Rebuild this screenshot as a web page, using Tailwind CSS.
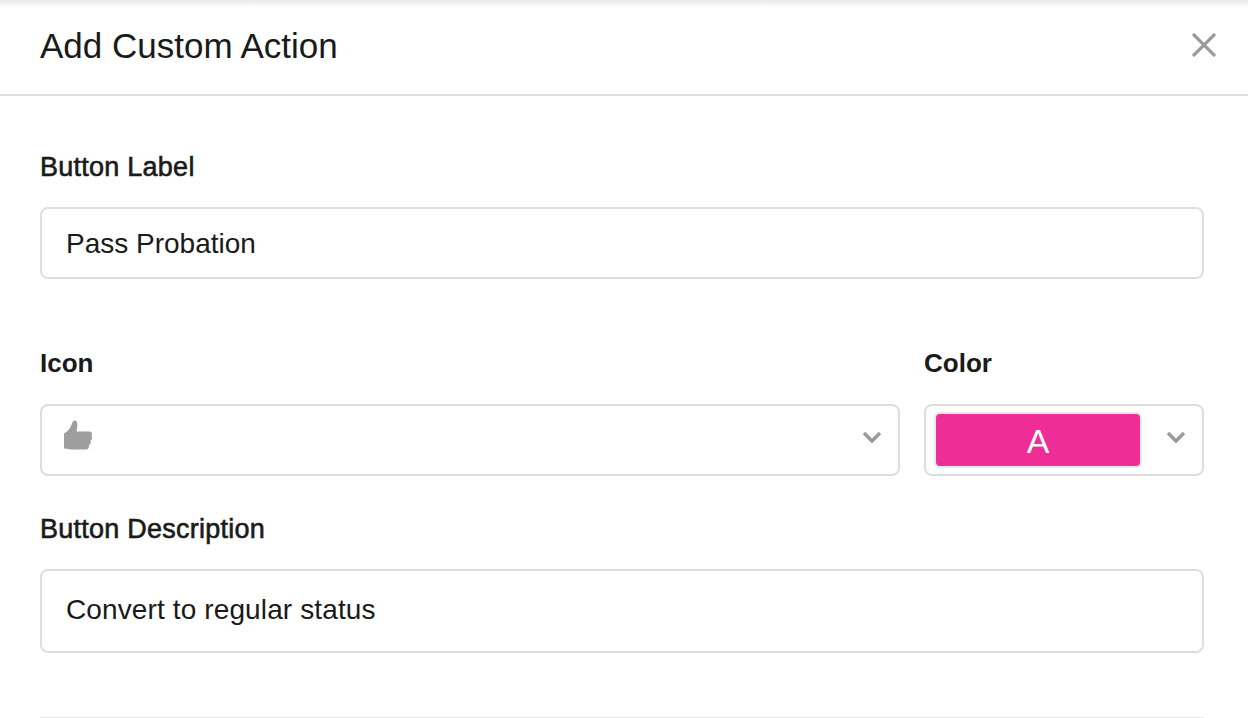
<!DOCTYPE html>
<html lang="en">
  <head>
    <meta charset="UTF-8" />
    <title>Add Custom Action</title>
    <script src="https://cdn.jsdelivr.net/npm/@tailwindcss/browser@4"></script>
  </head>
  <body class="bg-white text-[#1a1a1a] font-['Liberation_Sans',Arial,sans-serif] overflow-hidden">
    <div class="w-[1248px] h-[718px] overflow-hidden flex flex-col relative">
      <div class="absolute top-0 left-0 right-0 h-2 bg-gradient-to-b from-[#e9e9e9] to-white"></div>
      <header class="relative h-[96px] shrink-0 border-b-2 border-[#dedede] flex items-center justify-between pl-10 pr-[28px] pb-[4px]">
        <h1 class="text-[35px] leading-none font-normal">Add Custom Action</h1>
        <button class="w-[32px] h-[32px] flex items-center justify-center text-[#9a9a9a]">
          <svg width="24" height="24" viewBox="0 0 24 24" fill="none" stroke="currentColor" stroke-width="3.2"><path d="M1 1 L23 23 M23 1 L1 23" /></svg>
        </button>
      </header>

      <main class="flex-1 pl-10 pr-[44px] flex flex-col">
        <label class="block mt-[55px] text-[27px] leading-[32px] tracking-[0.25px] font-normal [-webkit-text-stroke:0.6px_#1a1a1a]">Button Label</label>
        <div class="mt-[24px] h-[72px] border-2 border-[#dedede] rounded-lg px-6 pt-[2px] flex items-center text-[28px]">Pass Probation</div>

        <div class="flex gap-6 mt-[68px]">
          <div class="w-[860px]">
            <label class="block text-[26px] leading-[32px] font-bold">Icon</label>
            <div class="mt-[25px] h-[72px] border-2 border-[#dedede] rounded-lg pl-[21px] pr-[16px] flex items-center justify-between">
              <svg width="30" height="34" viewBox="0 0 30 34" fill="#9e9e9e" class="-mt-2">
                <path d="M1 14.500 C4 13 7 10 8.500 6 C9.500 2 11 1 12.500 1.500 C14.500 2.500 15 6 13.500 12.500 L26 12.500 C29 12.500 29.500 15 28.500 16.500 C29.500 18 29.500 20.500 27.500 21.500 C28.500 23.500 27.500 25.500 26 26 C26.500 28.500 25 30.500 23 30.500 L11 30.500 C7 30.500 5 30 1 29.500 Z" />
              </svg>
              <svg width="20" height="14" viewBox="0 0 20 14" fill="none" stroke="#9a9a9a" stroke-width="3.400" class="-translate-y-[3px]"><path d="M2 3 L10 11 L18 3" /></svg>
            </div>
          </div>
          <div class="w-[280px]">
            <label class="block text-[26px] leading-[32px] font-bold">Color</label>
            <div class="mt-[25px] h-[72px] border-2 border-[#dedede] rounded-lg pl-[8px] pr-[16px] flex items-center justify-between">
              <div class="w-[208px] h-[56px] bg-[#ee2e96] border-2 border-[#e8e8e8] rounded-md text-white text-[34px] pt-[3px] flex items-center justify-center">A</div>
              <svg width="20" height="14" viewBox="0 0 20 14" fill="none" stroke="#9a9a9a" stroke-width="3.400" class="-translate-y-[3px]"><path d="M2 3 L10 11 L18 3" /></svg>
            </div>
          </div>
        </div>

        <label class="block mt-[37px] text-[27px] leading-[32px] tracking-[0.25px] font-normal [-webkit-text-stroke:0.6px_#1a1a1a]">Button Description</label>
        <div class="mt-[24px] h-[84px] border-2 border-[#dedede] rounded-lg px-6 pb-[2px] flex items-center text-[28px] tracking-[0.12px]">Convert to regular status</div>

        <div class="mt-[64px] border-t-2 border-[#e8e8e8]"></div>
      </main>
    </div>
  </body>
</html>
